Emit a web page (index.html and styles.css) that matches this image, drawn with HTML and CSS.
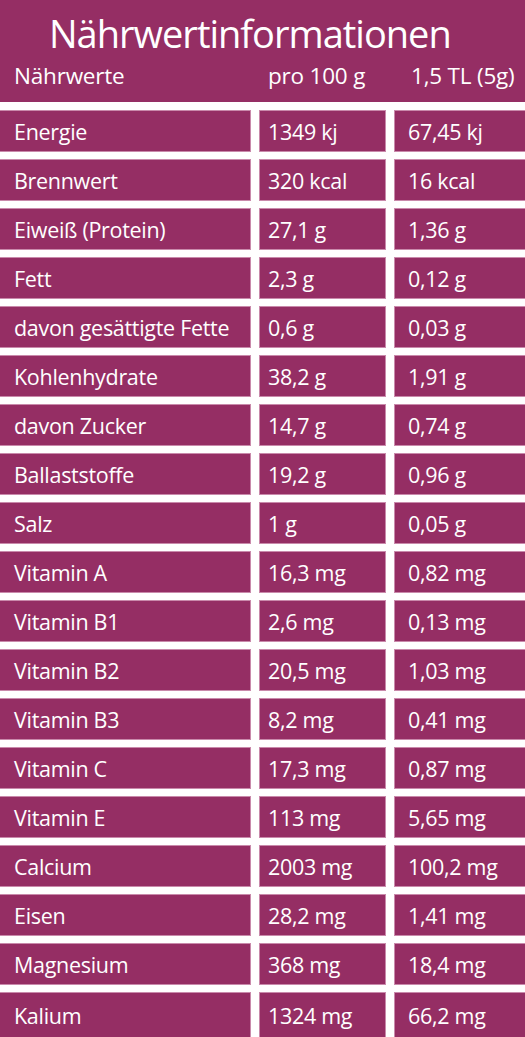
FILE: index.html
```html
<!DOCTYPE html>
<html lang="de">
<head>
<meta charset="utf-8">
<title>Nährwertinformationen</title>
<link rel="stylesheet" href="styles.css">
</head>
<body>
<div class="page">
  <header class="head">
    <h1 class="title">Nährwertinformationen</h1>
    <div class="cols">
      <span class="c1">Nährwerte</span>
      <span class="c2">pro 100 g</span>
      <span class="c3">1,5 TL (5g)</span>
    </div>
  </header>
  <div class="table">
    <div class="cell c1">Energie</div><div class="cell c2">1349 kj</div><div class="cell c3">67,45 kj</div>
    <div class="cell c1">Brennwert</div><div class="cell c2">320 kcal</div><div class="cell c3">16 kcal</div>
    <div class="cell c1">Eiweiß (Protein)</div><div class="cell c2">27,1 g</div><div class="cell c3">1,36 g</div>
    <div class="cell c1">Fett</div><div class="cell c2">2,3 g</div><div class="cell c3">0,12 g</div>
    <div class="cell c1">davon gesättigte Fette</div><div class="cell c2">0,6 g</div><div class="cell c3">0,03 g</div>
    <div class="cell c1">Kohlenhydrate</div><div class="cell c2">38,2 g</div><div class="cell c3">1,91 g</div>
    <div class="cell c1">davon Zucker</div><div class="cell c2">14,7 g</div><div class="cell c3">0,74 g</div>
    <div class="cell c1">Ballaststoffe</div><div class="cell c2">19,2 g</div><div class="cell c3">0,96 g</div>
    <div class="cell c1">Salz</div><div class="cell c2">1 g</div><div class="cell c3">0,05 g</div>
    <div class="cell c1">Vitamin A</div><div class="cell c2">16,3 mg</div><div class="cell c3">0,82 mg</div>
    <div class="cell c1">Vitamin B1</div><div class="cell c2">2,6 mg</div><div class="cell c3">0,13 mg</div>
    <div class="cell c1">Vitamin B2</div><div class="cell c2">20,5 mg</div><div class="cell c3">1,03 mg</div>
    <div class="cell c1">Vitamin B3</div><div class="cell c2">8,2 mg</div><div class="cell c3">0,41 mg</div>
    <div class="cell c1">Vitamin C</div><div class="cell c2">17,3 mg</div><div class="cell c3">0,87 mg</div>
    <div class="cell c1">Vitamin E</div><div class="cell c2">113 mg</div><div class="cell c3">5,65 mg</div>
    <div class="cell c1">Calcium</div><div class="cell c2">2003 mg</div><div class="cell c3">100,2 mg</div>
    <div class="cell c1">Eisen</div><div class="cell c2">28,2 mg</div><div class="cell c3">1,41 mg</div>
    <div class="cell c1">Magnesium</div><div class="cell c2">368 mg</div><div class="cell c3">18,4 mg</div>
    <div class="cell c1 last">Kalium</div><div class="cell c2 last">1324 mg</div><div class="cell c3 last">66,2 mg</div>
  </div>
</div>
</body>
</html>
```
FILE: styles.css
```css
* { box-sizing: border-box; }
html, body {
  margin: 0;
  padding: 0;
  background: #ffffff;
}
body {
  font-family: "Open Sans", "Liberation Sans", sans-serif;
  color: #ffffff;
  width: 525px;
  height: 1037px;
  overflow: hidden;
}
.page {
  display: flex;
  flex-direction: column;
  gap: 8px;
}
.head {
  background: #952e64;
  height: 102px;
  display: flex;
  flex-direction: column;
}
.title {
  margin: 0;
  padding: 8px 0 0 49px;
  font-size: 38px;
  font-weight: 400;
  line-height: 50px;
  letter-spacing: -1px;
}
.cols {
  display: grid;
  grid-template-columns: 251px 127px 131px;
  column-gap: 8px;
  font-size: 22.5px;
  line-height: 28px;
  letter-spacing: -0.2px;
  padding-top: 4px;
}
.cols .c1 { padding-left: 14px; }
.cols .c2 { padding-left: 9px; }
.cols .c3 { padding-left: 17px; }
.table {
  display: grid;
  grid-template-columns: 251px 127px 131px;
  grid-auto-rows: 42px;
  column-gap: 8px;
  row-gap: 7px;
}
.cell {
  background: #952e64;
  border: 1px solid #c98aab;
  display: flex;
  align-items: center;
  font-size: 21.5px;
  letter-spacing: -0.3px;
  line-height: 1;
  padding-top: 1px;
}
.cell.c1 { padding-left: 14px; border-left: 0; }
.cell.c2 { padding-left: 8px; }
.cell.c3 { padding-left: 13px; border-right: 0; }
.cell.last { height: 45px; border-bottom: 0; }
```
